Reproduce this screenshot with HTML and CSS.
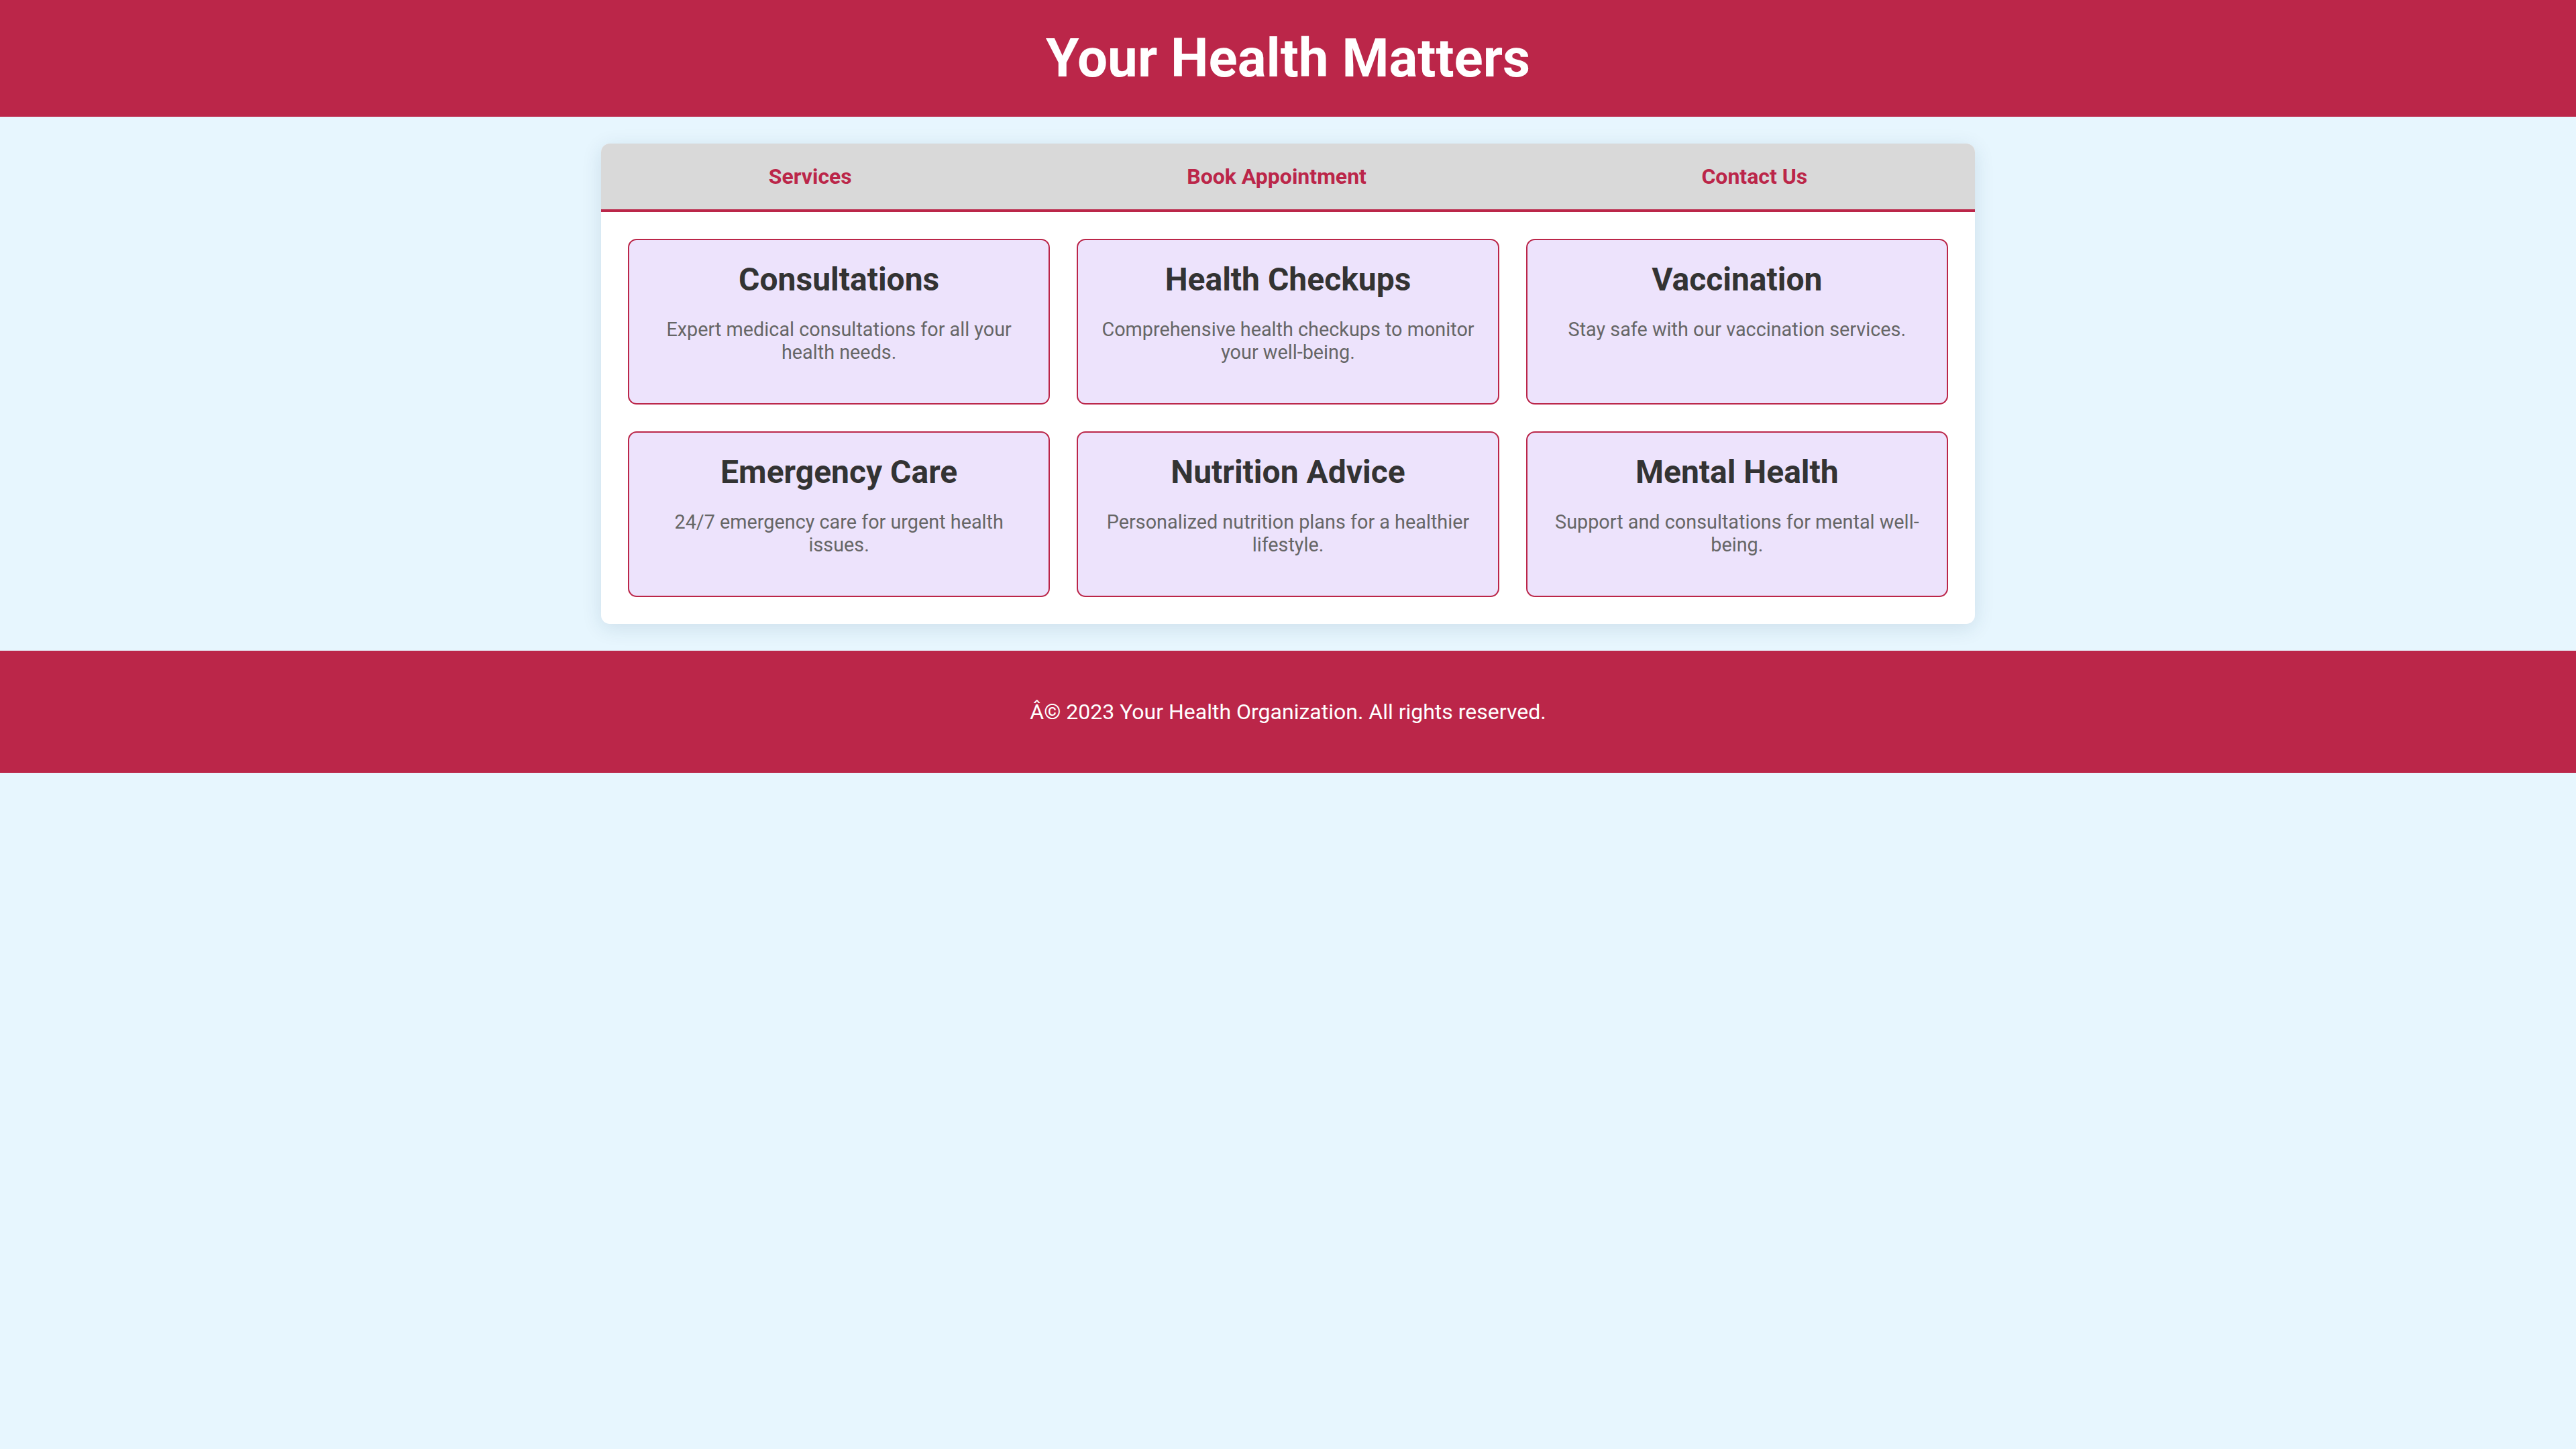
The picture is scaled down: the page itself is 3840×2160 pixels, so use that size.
FILE: index.html
```html
<!DOCTYPE html>
<html lang="en">
<head>
<meta charset="utf-8">
<title>Your Health Matters</title>
<link rel="stylesheet" href="styles.css">
</head>
<body>
<header class="site-header">
  <h1 class="site-title">Your Health Matters</h1>
</header>
<main class="panel">
  <nav class="tabs">
    <a class="tab">Services</a>
    <a class="tab">Book Appointment</a>
    <a class="tab">Contact Us</a>
  </nav>
  <section class="services">
    <div class="card">
      <h3 class="card-title">Consultations</h3>
      <p class="card-text">Expert medical consultations for all your health needs.</p>
    </div>
    <div class="card">
      <h3 class="card-title">Health Checkups</h3>
      <p class="card-text">Comprehensive health checkups to monitor your well-being.</p>
    </div>
    <div class="card">
      <h3 class="card-title">Vaccination</h3>
      <p class="card-text">Stay safe with our vaccination services.</p>
    </div>
    <div class="card">
      <h3 class="card-title">Emergency Care</h3>
      <p class="card-text">24/7 emergency care for urgent health issues.</p>
    </div>
    <div class="card">
      <h3 class="card-title">Nutrition Advice</h3>
      <p class="card-text">Personalized nutrition plans for a healthier lifestyle.</p>
    </div>
    <div class="card">
      <h3 class="card-title">Mental Health</h3>
      <p class="card-text">Support and consultations for mental well-being.</p>
    </div>
  </section>
</main>
<footer class="site-footer">
  <p class="footer-text">Â© 2023 Your Health Organization. All rights reserved.</p>
</footer>
</body>
</html>
```
FILE: styles.css
```css
* { box-sizing: border-box; }

body {
  margin: 0;
  background: #e7f6fe;
  font-family: Roboto, "Liberation Sans", Arial, sans-serif;
  color: #333;
}

.site-header {
  background: #bb2649;
  padding: 40px 0;
  text-align: center;
}

.site-title {
  margin: 0;
  color: #fff;
  font-size: 80px;
  font-weight: 700;
  line-height: normal;
}

.panel {
  width: 2048px;
  margin: 40px auto;
  background: #fff;
  border-radius: 13px;
  box-shadow: 0 6px 30px rgba(20, 60, 90, 0.12);
  overflow: hidden;
}

.tabs {
  display: flex;
  background: #d9d9d9;
  border-bottom: 4px solid #bb2649;
}

.tab {
  flex: 1 1 auto;
  text-align: center;
  padding: 30px 0;
  color: #bb2649;
  font-size: 32px;
  font-weight: 700;
  line-height: normal;
  cursor: pointer;
}

.services {
  display: grid;
  grid-template-columns: repeat(3, 1fr);
  gap: 40px;
  padding: 40px;
}

.card {
  background: #ede3fc;
  border: 2px solid #bb2649;
  border-radius: 13px;
  padding: 30px;
  text-align: center;
}

.card-title {
  margin: 0;
  font-size: 48px;
  font-weight: 700;
  color: #333;
  line-height: normal;
}

.card-text {
  margin: 29px 0;
  font-size: 28.8px;
  color: #666;
  line-height: normal;
}

.site-footer {
  background: #bb2649;
  padding: 40px 0;
  text-align: center;
}

.footer-text {
  margin: 32px 0;
  color: #fff;
  font-size: 32px;
  line-height: normal;
}
```
